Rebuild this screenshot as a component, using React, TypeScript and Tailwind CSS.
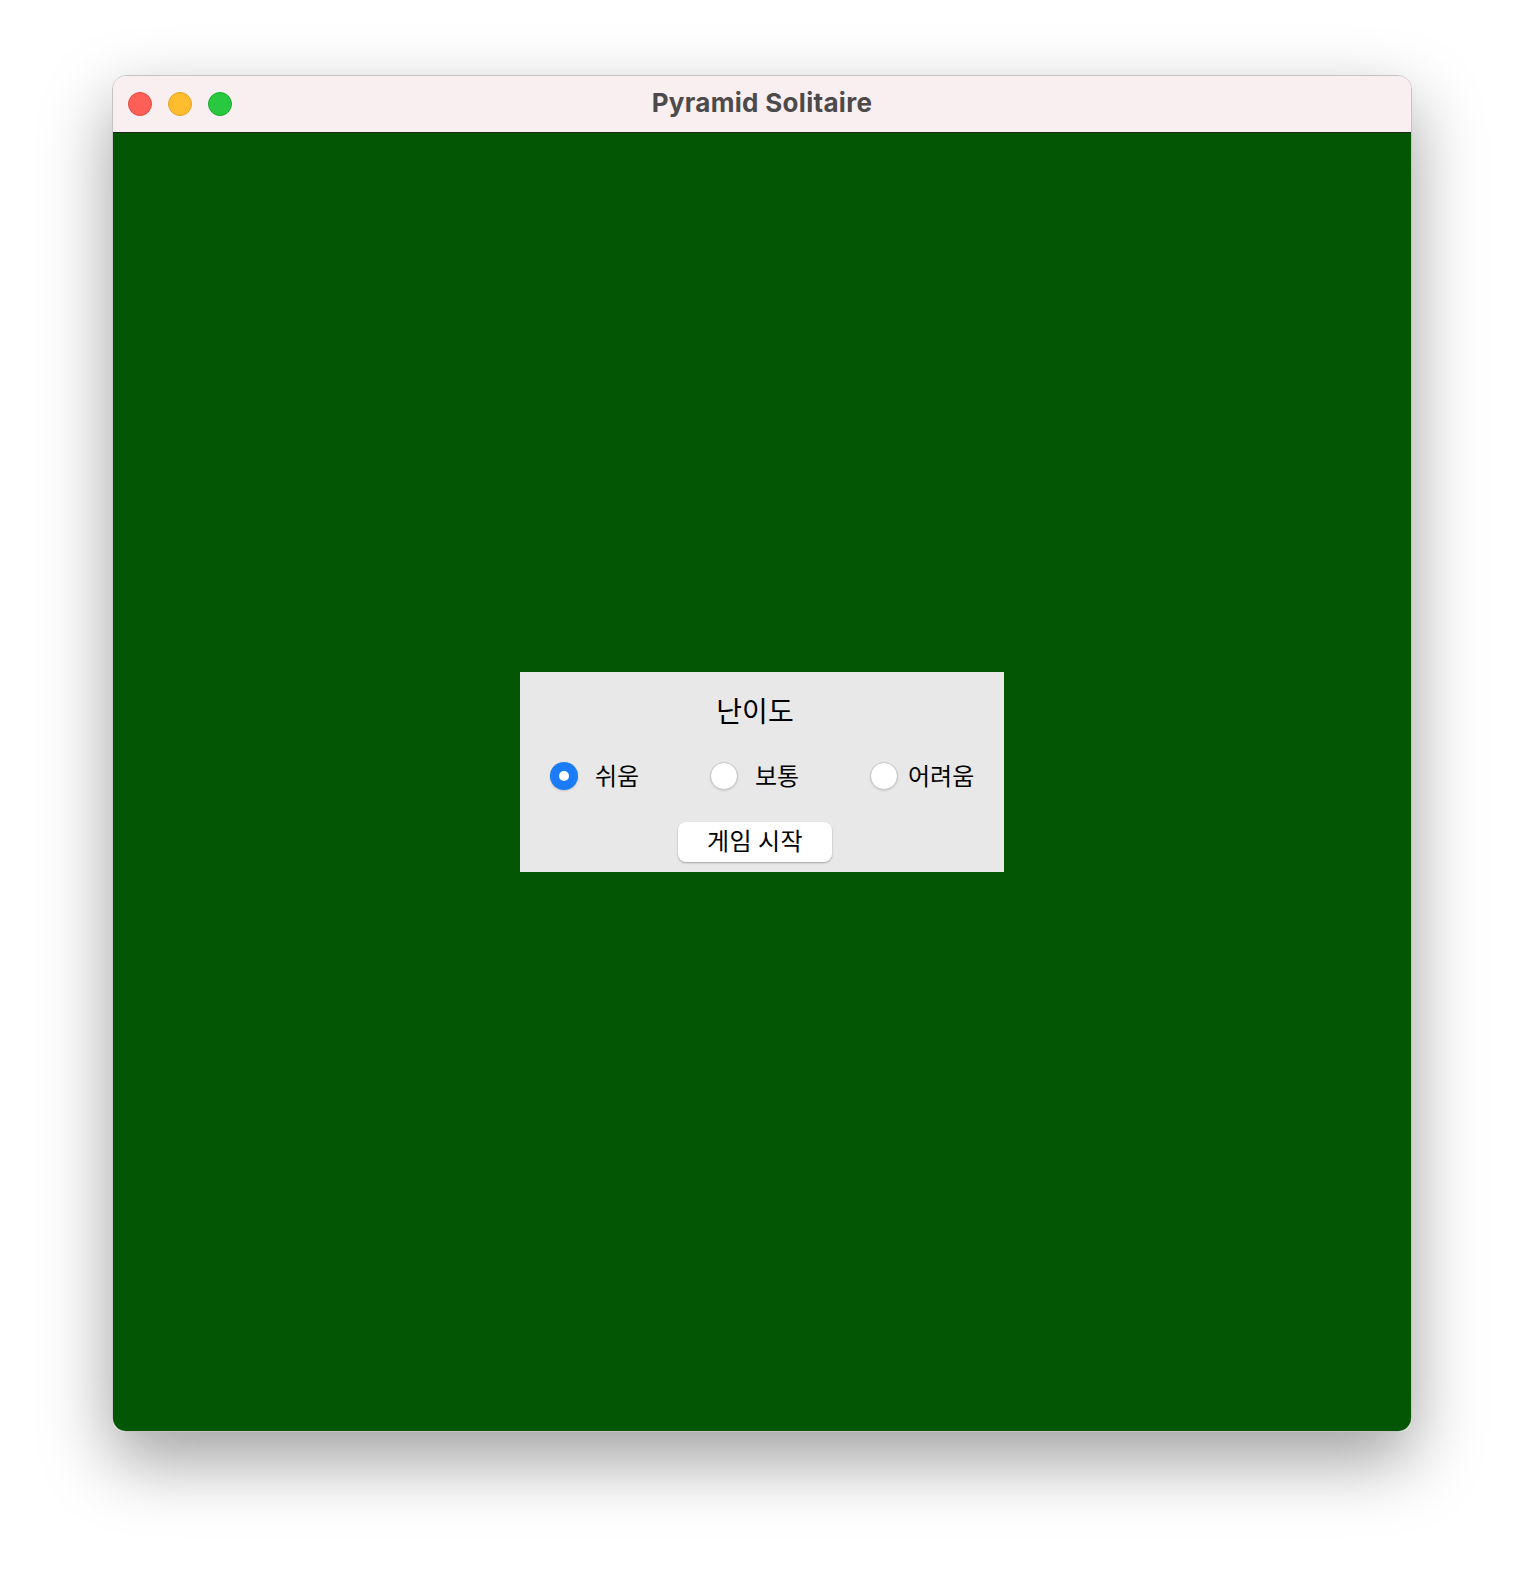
export default function App() {
  const kr = { fontFamily: '"Noto Sans CJK KR", "Noto Sans", sans-serif' };
  return (
    <div className="w-[1524px] h-[1580px] bg-white pt-[75px] pl-[112px]">
      <div className="w-[1300px] h-[1357px] rounded-[14px] overflow-hidden shadow-[0_28px_70px_rgba(0,0,0,0.38)] border border-[#c4c4c4] flex flex-col">
        <div className="h-[57px] shrink-0 bg-[#f9eef0] border-b border-[#1e2a1e] grid grid-cols-[1fr_auto_1fr] items-center">
          <div className="flex items-center gap-[16px] pl-[15px]">
            <div className="w-[24px] h-[24px] rounded-full bg-[#fe5f57] border border-[#e24b41]" />
            <div className="w-[24px] h-[24px] rounded-full bg-[#febc2e] border border-[#e1a325]" />
            <div className="w-[24px] h-[24px] rounded-full bg-[#28c840] border border-[#1aab29]" />
          </div>
          <div
            className="text-[26px] font-bold tracking-[0.3px] text-[#4c4a4b] leading-none pb-[2px]"
            style={{ fontFamily: 'Inter, "Noto Sans", sans-serif' }}
          >
            Pyramid Solitaire
          </div>
          <div />
        </div>
        <div className="flex-1 bg-[#035603] flex justify-center pt-[539px]">
          <div className="w-[484px] h-[200px] bg-[#e8e8e8] flex flex-col items-center pr-[14px] pt-[20px] text-black" style={kr}>
            <div className="h-[36px] text-[28px] leading-[36px]">난이도</div>
            <div className="mt-[32px] h-[32px] w-full flex items-center pl-[30px]">
              <div className="w-[160px] shrink-0 flex items-center">
                <div className="w-[28px] h-[28px] rounded-full bg-[#1a7cf6] flex items-center justify-center shadow-[0_1px_2px_rgba(0,0,0,0.15)]">
                  <div className="w-[10px] h-[10px] rounded-full bg-white" />
                </div>
                <span className="ml-[17px] text-[24px] leading-[30px] pb-[2px]">쉬움</span>
              </div>
              <div className="w-[160px] shrink-0 flex items-center">
                <div className="w-[28px] h-[28px] rounded-full bg-white border border-[#c6c6c6] shadow-[0_1px_2px_rgba(0,0,0,0.12)]" />
                <span className="ml-[17px] text-[24px] leading-[30px] pb-[2px]">보통</span>
              </div>
              <div className="w-[140px] shrink-0 flex items-center">
                <div className="w-[28px] h-[28px] rounded-full bg-white border border-[#c6c6c6] shadow-[0_1px_2px_rgba(0,0,0,0.12)]" />
                <span className="ml-[10px] text-[24px] leading-[30px] pb-[2px]">어려움</span>
              </div>
            </div>
            <button className="mt-[30px] w-[154px] h-[40px] rounded-[8px] bg-white shadow-[0_1px_2px_rgba(0,0,0,0.3)] text-[24px] tracking-[0.5px] leading-[36px] pb-[4px] text-black" style={kr}>
              게임 시작
            </button>
          </div>
        </div>
      </div>
    </div>
  );
}
